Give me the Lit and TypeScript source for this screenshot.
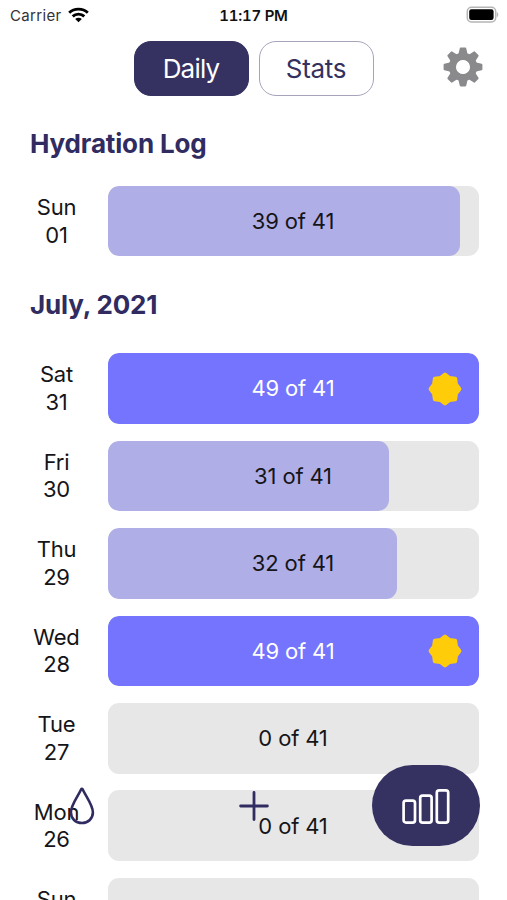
import { LitElement, html, css, svg, nothing } from "lit";
import { customElement, property } from "lit/decorators.js";

const polar = (r: number, deg: number) => {
  const a = (deg * Math.PI) / 180;
  return `${(r * Math.cos(a)).toFixed(2)},${(r * Math.sin(a)).toFixed(2)}`;
};

const starPoints = Array.from({ length: 16 }, (_, i) =>
  polar(i % 2 ? 11.9 : 14.4, i * 22.5)
).join(" ");

const star = html`<svg class="star" width="34" height="34" viewBox="-17 -17 34 34">
  <polygon points=${starPoints} fill="#ffcc0a" stroke="#ffcc0a" stroke-width="4" stroke-linejoin="round" />
</svg>`;

const gear = html`<svg class="gear" width="40" height="40" viewBox="-20 -20 40 40">
  <g fill="#8a8a8d" stroke="#8a8a8d" stroke-width="2" stroke-linejoin="round">
    ${[0, 45, 90, 135, 180, 225, 270, 315].map(
      (a) => svg`<path transform="rotate(${a})" d="M-3.7 -12L-2.3 -18.4H2.3L3.7 -12Z" />`
    )}
  </g>
  <circle r="10.5" fill="none" stroke="#8a8a8d" stroke-width="7.4" />
  <circle r="6.9" fill="#fff" />
</svg>`;

interface Day {
  name: string;
  date: string;
  amount: number;
}

const GOAL = 41;

const sections: { title: string; days: Day[] }[] = [
  { title: "Hydration Log", days: [{ name: "Sun", date: "01", amount: 39 }] },
  {
    title: "July, 2021",
    days: [
      { name: "Sat", date: "31", amount: 49 },
      { name: "Fri", date: "30", amount: 31.15 },
      { name: "Thu", date: "29", amount: 32 },
      { name: "Wed", date: "28", amount: 49 },
      { name: "Tue", date: "27", amount: 0 },
      { name: "Mon", date: "26", amount: 0 },
      { name: "Sun", date: "25", amount: 0 },
    ],
  },
];

@customElement("day-row")
export class DayRow extends LitElement {
  @property({ attribute: false }) day!: Day;

  static styles = css`
    :host {
      display: flex;
      align-items: center;
      height: 70.6px;
      color: #151518;
      font-size: 22px;
    }
    .label {
      width: 53px;
      margin-right: 24.5px;
      padding-top: 1px;
      text-align: center;
      line-height: 27.6px;
      letter-spacing: -0.2px;
    }
    .track {
      position: relative;
      flex: 1;
      height: 100%;
      border-radius: 11px;
      background: #e7e7e7;
      display: grid;
      place-items: center;
      overflow: hidden;
    }
    .fill {
      grid-area: 1 / 1;
      justify-self: start;
      height: 100%;
      border-radius: 11px;
      background: #b0aee7;
    }
    .done .fill {
      background: #7474fe;
    }
    .text {
      grid-area: 1 / 1;
      letter-spacing: -0.15px;
    }
    .done .text {
      color: #fff;
    }
    .star {
      position: absolute;
      right: 16.5px;
      top: 18.7px;
    }
  `;

  render() {
    const { name, date, amount } = this.day;
    const done = amount >= GOAL;
    const pct = Math.min(100, (amount / GOAL) * 100);
    return html`
      <div class="label"><div>${name}</div><div>${date}</div></div>
      <div class="track ${done ? "done" : ""}">
        <div class="fill" style="width:${pct}%"></div>
        <span class="text">${Math.round(amount)} of ${GOAL}</span>
        ${done ? star : nothing}
      </div>
    `;
  }
}

@customElement("app-root")
export class AppRoot extends LitElement {
  static styles = css`
    :host {
      display: block;
      position: relative;
      height: 900px;
      overflow: hidden;
      background: #fff;
      font-family: Inter, "Liberation Sans", sans-serif;
      color: #151518;
    }
    .status {
      display: grid;
      grid-template-columns: 1fr auto 1fr;
      align-items: center;
      height: 30px;
      padding: 0 8px 0 10px;
      font-size: 15px;
    }
    .carrier {
      display: flex;
      align-items: center;
      gap: 6px;
      color: #333;
      letter-spacing: 0.35px;
    }
    .time {
      font-weight: 600;
      font-variant-numeric: tabular-nums;
      letter-spacing: -0.25px;
      margin-right: 2px;
      color: #111;
    }
    .battery {
      justify-self: end;
    }
    .tabs {
      display: grid;
      grid-template-columns: 1fr auto 1fr;
      align-items: center;
      margin-top: 11px;
      padding: 0 24px;
    }
    .buttons {
      grid-column: 2;
      display: flex;
      gap: 10px;
    }
    .tab {
      box-sizing: border-box;
      width: 115px;
      height: 55px;
      border-radius: 17px;
      border: 1.5px solid #a6a4bb;
      display: grid;
      place-items: center;
      font-size: 26px;
      letter-spacing: -0.3px;
      color: #34305f;
    }
    .tab.on {
      background: #353161;
      border-color: #353161;
      color: #fff;
      letter-spacing: -0.8px;
    }
    .gear {
      justify-self: end;
      margin-top: -4px;
    }
    .log {
      padding: 0 28.5px 0 30px;
    }
    .title {
      margin: 0;
      height: 32px;
      line-height: 32px;
      font-size: 26px;
      font-weight: 700;
      letter-spacing: -0.15px;
      color: #302b60;
    }
    .section {
      padding-top: 32.3px;
    }
    .days {
      display: flex;
      flex-direction: column;
      gap: 16.85px;
      margin-top: 25.5px;
    }
    .section + .section .days {
      margin-top: 32.5px;
    }
    .nav {
      position: absolute;
      left: 27px;
      right: 27px;
      top: 765px;
      height: 81px;
      display: flex;
      justify-content: space-between;
    }
    .item {
      width: 108px;
      height: 81px;
      display: grid;
      place-items: center;
    }
    .item.on {
      border-radius: 41px;
      background: #353161;
    }
  `;

  render() {
    return html`
      <div class="status">
        <div class="carrier">
          <span>Carrier</span>
          <svg width="21" height="16" viewBox="0 0 21 16">
            <g fill="none" stroke="#000" stroke-width="2.9">
              <path d="M1.2 5.7C6.2 0.9 14.8 0.9 19.8 5.7" />
              <path d="M4.7 9.4C7.9 6.3 13.1 6.3 16.3 9.4" />
            </g>
            <path d="M10.5 15.3L7.2 12C9 10.3 12 10.3 13.8 12Z" fill="#000" />
          </svg>
        </div>
        <div class="time">11:17 PM</div>
        <svg class="battery" width="33" height="18" viewBox="0 0 33 18">
          <rect x="1.3" y="1.3" width="28.4" height="14.6" rx="4.2" fill="#fff" stroke="#b5b5b5" stroke-width="1.5" />
          <rect x="3.2" y="3.3" width="24.4" height="10.6" rx="2.2" fill="#000" />
          <path d="M31.2 6.5Q32.8 8.6 31.2 10.7Z" fill="#aaa" stroke="#aaa" stroke-width=".5" />
        </svg>
      </div>
      <div class="tabs">
        <div class="buttons">
          <div class="tab on">Daily</div>
          <div class="tab">Stats</div>
        </div>
        ${gear}
      </div>
      <div class="log">
        ${sections.map(
          (s) => html`<section class="section">
            <h2 class="title">${s.title}</h2>
            <div class="days">${s.days.map((d) => html`<day-row .day=${d}></day-row>`)}</div>
          </section>`
        )}
      </div>
      <div class="nav">
        <div class="item">
          <svg width="30" height="38" viewBox="-1 0 30 38">
            <path
              d="M15.6 2.2C15.2 1.5 14.6 1.5 14.2 2.2C10.8 9.5 3.9 18 3.9 25.3C3.9 31.5 8.5 36 14.9 36S25.9 31.5 25.9 25.3C25.9 18 19 9.5 15.6 2.2Z"
              fill="none" stroke="#302b60" stroke-width="2.6" stroke-linejoin="round" />
          </svg>
        </div>
        <div class="item">
          <svg width="32" height="32" viewBox="-16 -16 32 32">
            <path d="M-13.4 0H13.4M0 -13.6V13.6" fill="none" stroke="#302b60" stroke-width="2.8" stroke-linecap="round" />
          </svg>
        </div>
        <div class="item on">
          <svg width="50" height="38" viewBox="0 0 50 38">
            <g fill="none" stroke="#fff" stroke-width="2.7">
              <rect x="2.6" y="13.6" width="11.4" height="22" rx="2.4" />
              <rect x="19.2" y="8.6" width="11.4" height="27" rx="2.4" />
              <rect x="35.8" y="3.4" width="11.4" height="32.2" rx="2.4" />
            </g>
          </svg>
        </div>
      </div>
    `;
  }
}
